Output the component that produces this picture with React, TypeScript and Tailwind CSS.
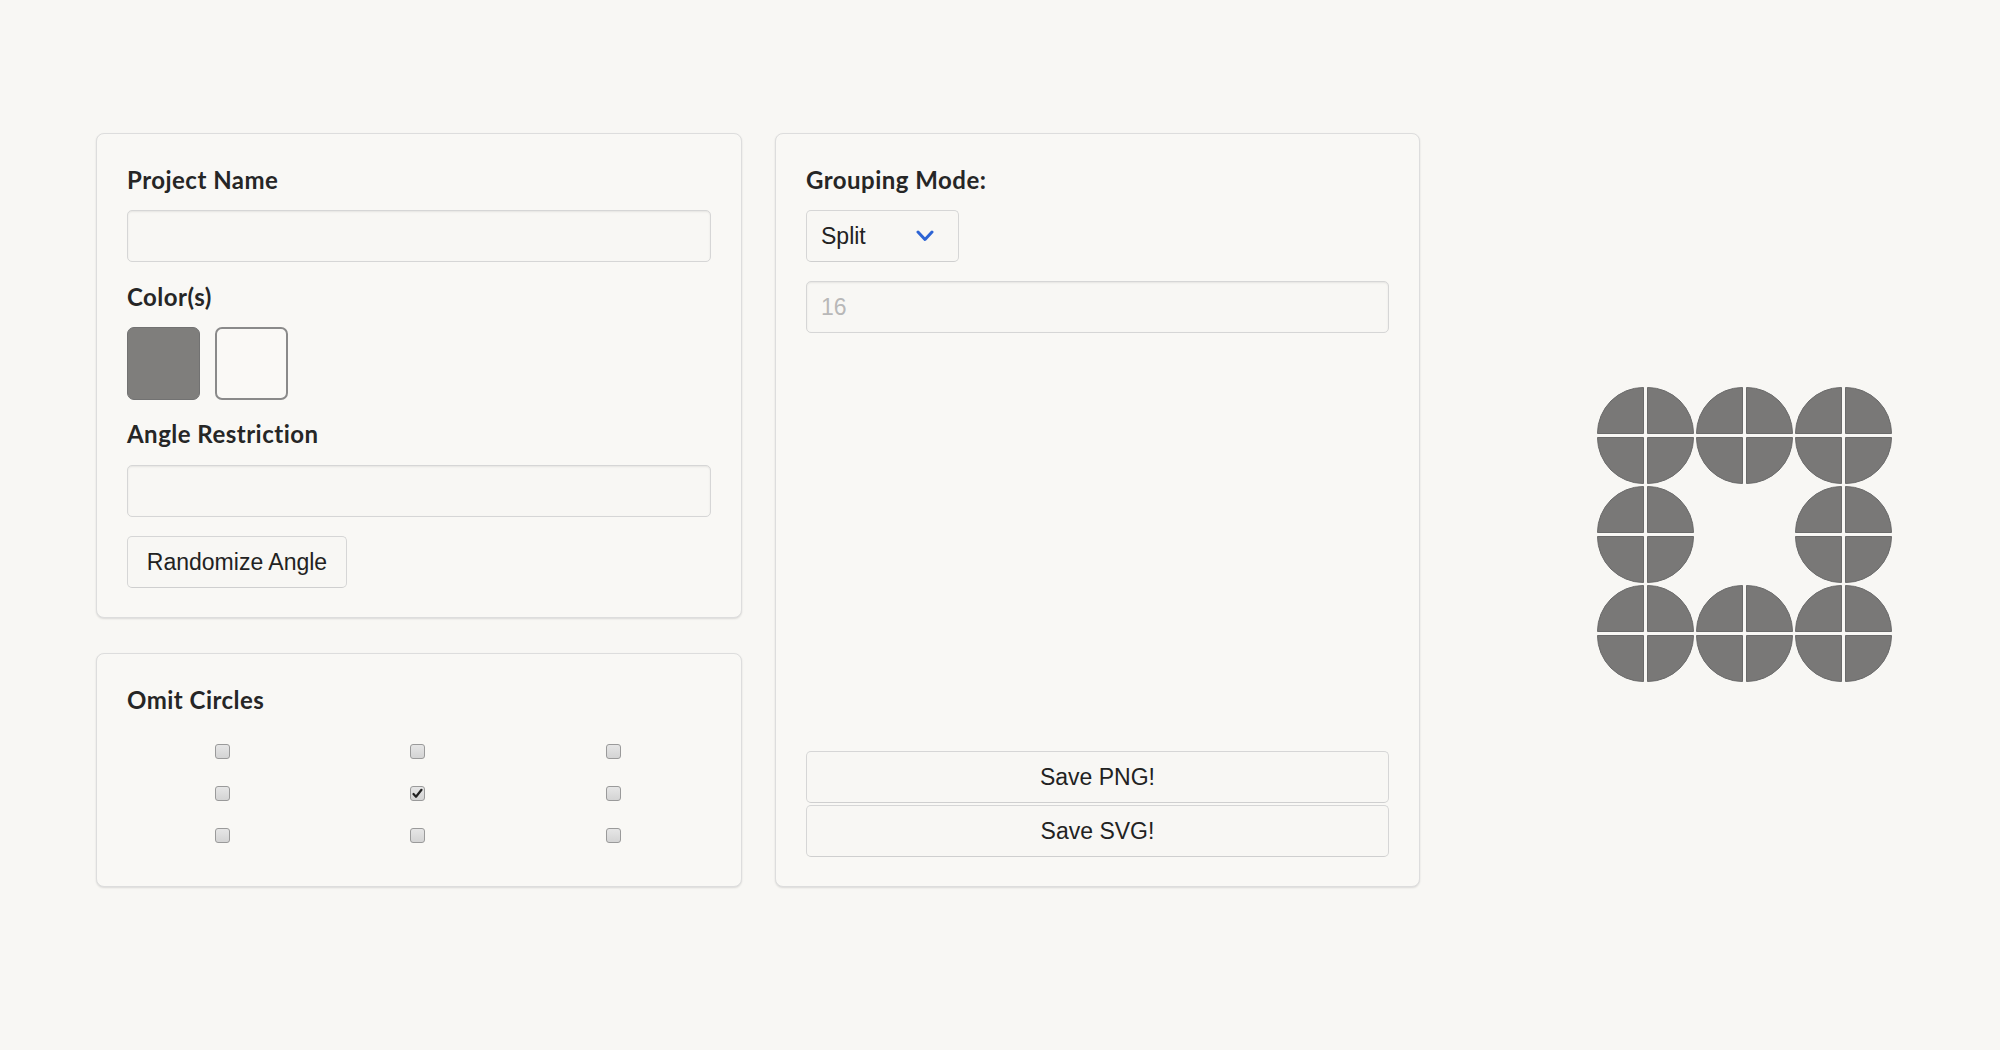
import { useState } from "react";

const labelCls =
  "block font-['Lato',sans-serif] font-bold text-[24px] leading-[28px] tracking-[0.02em] text-[#262626]";
const fieldCls =
  "block w-full h-[52px] rounded-[5px] border border-[#d6d6d6] bg-[#f8f7f4] shadow-[inset_0_1px_2px_rgba(0,0,0,0.08)] px-[14px] font-['Liberation_Sans',Arial,sans-serif] text-[23px] text-[#222] outline-none placeholder:text-[#b8b8b8]";
const buttonCls =
  "h-[52px] rounded-[5px] border border-[#d6d6d6] border-b-[#cfcfcf] bg-[#f8f7f4] font-['Liberation_Sans',Arial,sans-serif] text-[23px] text-[#222]";
const cardCls =
  "rounded-[8px] border border-[#dddddd] bg-[#f9f8f5] shadow-[0_1px_2px_rgba(0,0,0,0.12)] px-[30px]";

const Checkbox = ({ checked, onClick }: { checked: boolean; onClick: () => void }) => (
  <span
    onClick={onClick}
    className="flex h-[15px] w-[15px] cursor-pointer items-center justify-center rounded-[3px] border border-[#9a9a9a] bg-gradient-to-b from-[#e6e6e6] to-[#d4d4d4]"
  >
    {checked && (
      <svg width="11" height="11" viewBox="0 0 11 11">
        <path d="M1.5 6 L4 8.8 L9.5 1.8" fill="none" stroke="#222" strokeWidth="2.2" strokeLinecap="round" strokeLinejoin="round" />
      </svg>
    )}
  </span>
);

const Quarter = ({ cx, cy }: { cx: number; cy: number }) => {
  const r = 46;
  const g = 2;
  return (
    <g transform={`translate(${cx} ${cy})`} fill="#797877" stroke="#6a6a6a" strokeWidth="1">
      <path d={`M${-g} ${-g} L${-g - r} ${-g} A${r} ${r} 0 0 1 ${-g} ${-g - r} Z`} />
      <path d={`M${g} ${-g} L${g} ${-g - r} A${r} ${r} 0 0 1 ${g + r} ${-g} Z`} />
      <path d={`M${g} ${g} L${g + r} ${g} A${r} ${r} 0 0 1 ${g} ${g + r} Z`} />
      <path d={`M${-g} ${g} L${-g} ${g + r} A${r} ${r} 0 0 1 ${-g - r} ${g} Z`} />
    </g>
  );
};

const Pattern = ({ omit }: { omit: boolean[] }) => {
  const centers = [48.5, 147.5, 246.5];
  return (
    <svg width="296" height="296" viewBox="0 0 296 296">
      {centers.map((cy, row) =>
        centers.map((cx, col) =>
          omit[row * 3 + col] ? null : <Quarter key={`${row}-${col}`} cx={cx} cy={cy} />
        )
      )}
    </svg>
  );
};

export default function App() {
  const [omit, setOmit] = useState<boolean[]>([false, false, false, false, true, false, false, false, false]);

  const toggle = (i: number) => setOmit(omit.map((v, j) => (j === i ? !v : v)));

  return (
    <div className="min-h-screen w-full bg-[#f8f7f4] pt-[133px] pl-[96px]">
      <div className="flex items-start">
        <div className="flex items-stretch gap-[33px]">
          {/* left column */}
          <div className="flex w-[646px] flex-col gap-[35px]">
            <div className={`${cardCls} pt-[32px] pb-[29px]`}>
              <label className={labelCls}>Project Name</label>
              <input className={`${fieldCls} mt-[16px]`} />

              <label className={`${labelCls} mt-[21px]`}>Color(s)</label>
              <div className="mt-[16px] flex gap-[15px]">
                <span className="h-[73px] w-[73px] rounded-[7px] border border-[#727272] bg-[#7f7e7c]" />
                <span className="h-[73px] w-[73px] rounded-[7px] border-2 border-[#8a8a8a] bg-[#faf9f6]" />
              </div>

              <label className={`${labelCls} mt-[20px]`}>Angle Restriction</label>
              <input className={`${fieldCls} mt-[17px]`} />

              <button className={`${buttonCls} mt-[19px] w-[220px]`}>Randomize Angle</button>
            </div>

            <div className={`${cardCls} pt-[32px] pb-[30px]`}>
              <label className={labelCls}>Omit Circles</label>
              <div className="mt-[16px] -ml-[2px] grid grid-cols-3">
                {omit.map((v, i) => (
                  <div key={i} className="flex h-[42px] items-center justify-center">
                    <Checkbox checked={v} onClick={() => toggle(i)} />
                  </div>
                ))}
              </div>
            </div>
          </div>

          {/* middle column */}
          <div className={`${cardCls} flex w-[645px] flex-col pt-[32px] pb-[29px]`}>
            <label className={labelCls}>Grouping Mode:</label>
            <div className={`${buttonCls} mt-[16px] flex w-[153px] items-center justify-between pl-[14px] pr-[24px]`}>
              <span>Split</span>
              <svg width="18" height="12" viewBox="0 0 18 12">
                <path d="M2 2 L9 9.5 L16 2" fill="none" stroke="#2d64d4" strokeWidth="3" strokeLinecap="round" strokeLinejoin="round" />
              </svg>
            </div>
            <input className={`${fieldCls} mt-[19px]`} placeholder="16" />

            <div className="mt-auto flex flex-col gap-[2px]">
              <button className={`${buttonCls} w-full`}>Save PNG!</button>
              <button className={`${buttonCls} w-full`}>Save SVG!</button>
            </div>
          </div>
        </div>

        {/* preview */}
        <div className="ml-[177px] mt-[254px]">
          <Pattern omit={omit} />
        </div>
      </div>
    </div>
  );
}
